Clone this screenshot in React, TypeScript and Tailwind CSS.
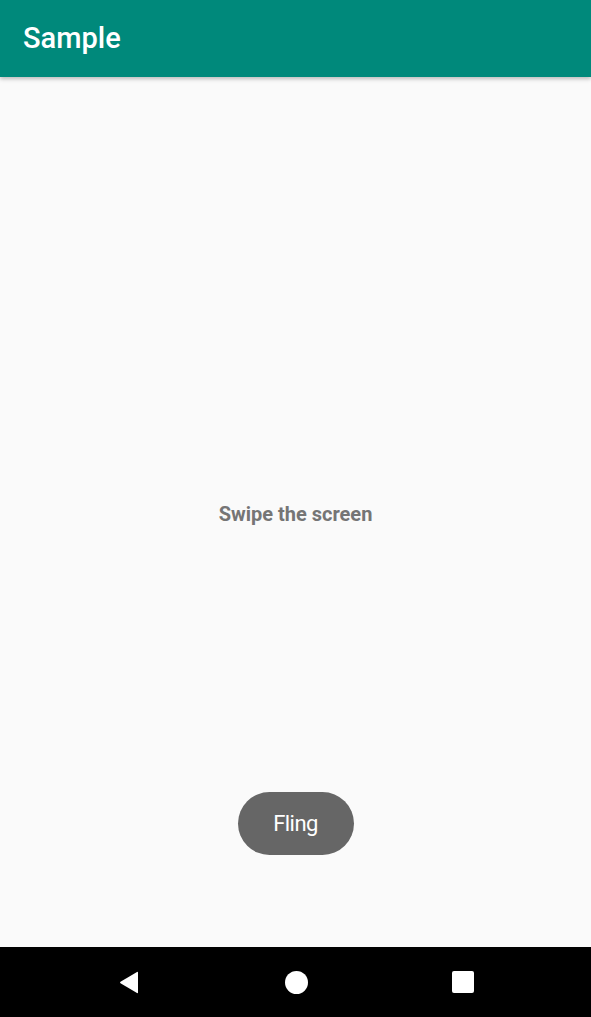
const App = () => {
  return (
    <div className="flex h-[1017px] w-full flex-col bg-[#fafafa] font-['Roboto',sans-serif]">
      <header className="relative z-10 flex h-[77px] shrink-0 items-center bg-[#00897b] pl-[23px] shadow-[0_2px_4px_rgba(0,0,0,0.25)]">
        <h1 className="text-[29px] font-medium text-white">Sample</h1>
      </header>

      <main className="relative flex flex-1 flex-col items-center">
        <div className="flex flex-1 items-center justify-center pt-[3px]">
          <p className="text-[20px] font-bold text-[#757575]">Swipe the screen</p>
        </div>
        <div className="absolute bottom-[92px] left-0 right-0 flex justify-center">
          <button className="flex h-[63px] w-[116px] items-center justify-center rounded-full bg-[#666666] text-[22px] tracking-tight text-white">
            Fling
          </button>
        </div>
      </main>

      <nav className="flex h-[70px] shrink-0 items-center bg-black">
        <div className="flex w-full items-center">
          <div className="ml-[119px] w-[21px]">
            <svg width="21" height="23" viewBox="0 0 21 23">
              <path d="M19 1.5 L19 21.5 Q19 22.5 18 22 L1.5 12.3 Q0.5 11.5 1.5 10.7 L18 1 Q19 0.5 19 1.5 Z" fill="white" />
            </svg>
          </div>
          <div className="ml-[145px] h-[23px] w-[23px] rounded-full bg-white" />
          <div className="ml-[144px] h-[22px] w-[22px] rounded-[2px] bg-white" />
        </div>
      </nav>
    </div>
  );
};

export default App;
